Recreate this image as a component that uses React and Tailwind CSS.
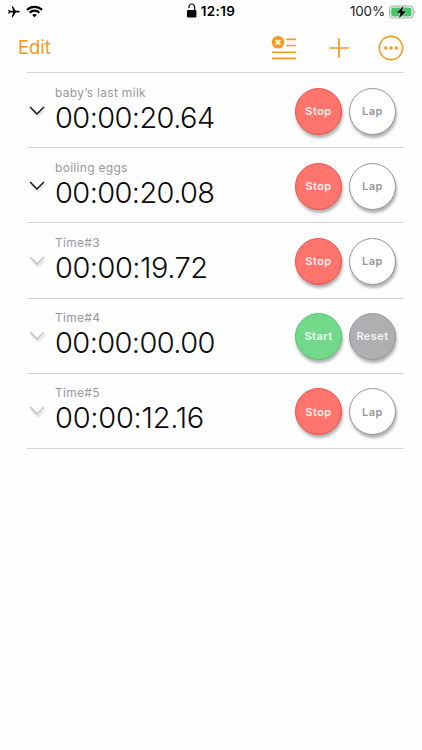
import { useState } from 'react'
import { MdFlight } from 'react-icons/md'

const initialTimers = [
  { id: 1, name: 'baby’s last milk', time: '00:00:20.64', running: true, hasLaps: true, tracking: 'tracking-[-0.6px]' },
  { id: 2, name: 'boiling eggs', time: '00:00:20.08', running: true, hasLaps: true, tracking: 'tracking-[-0.6px]' },
  { id: 3, name: 'Time#3', time: '00:00:19.72', running: true, hasLaps: false, tracking: 'tracking-[-0.5px]' },
  { id: 4, name: 'Time#4', time: '00:00:00.00', running: false, hasLaps: false, tracking: 'tracking-[-0.6px]' },
  { id: 5, name: 'Time#5', time: '00:00:12.16', running: true, hasLaps: false, tracking: 'tracking-[-0.25px]' },
]

function StatusBar() {
  return (
    <div className="grid h-[23px] grid-cols-3 items-center text-black">
      <div className="flex items-center gap-[5px] pl-[7px]">
        <MdFlight className="h-[14px] w-[14px] rotate-90" />
        <svg className="h-[13px] w-[17px]" viewBox="0 0 17 13" fill="none" stroke="currentColor" strokeWidth="2.3">
          <path d="M1 4.9a10.7 10.7 0 0 1 15 0" />
          <path d="M3.7 7.7a6.8 6.8 0 0 1 9.6 0" />
          <path d="M8.5 12.3 6.2 10a3.3 3.3 0 0 1 4.6 0z" fill="currentColor" stroke="none" />
        </svg>
      </div>

      <div className="flex items-center justify-center gap-[4px]">
        <svg className="h-[15px] w-[10px] -translate-y-px" viewBox="0 0 10 15">
          <rect x="0" y="7" width="9.4" height="7.5" rx="0.9" fill="currentColor" />
          <path d="M2 5V3.8a2.8 2.8 0 0 1 5.6 0V7.5" fill="none" stroke="currentColor" strokeWidth="1.2" />
        </svg>
        <span className="pt-px text-[13.5px] leading-none font-semibold tracking-[0.35px]">12:19</span>
      </div>

      <div className="flex items-center justify-end gap-[4px] pr-[6px]">
        <span className="pt-px text-[13.5px] leading-none tracking-[-0.2px] text-[#222]">100%</span>
        <svg className="h-[14px] w-[27px]" viewBox="0 0 27 14">
          <rect x="0.6" y="1" width="23.5" height="12" rx="3.5" fill="#fff" stroke="#a5a5a8" strokeWidth="1.1" />
          <rect x="2.2" y="2.6" width="20.3" height="8.8" rx="2.2" fill="#42c767" />
          <path d="M25.3 5.2c1.5.6 1.5 3 0 3.6z" fill="#a5a5a8" />
          <path d="M14.7.8 7.2 7.7h4.4L9.9 13.3l7.5-7h-4.3z" fill="#000" stroke="#fff" strokeWidth="0.8" paintOrder="stroke" />
        </svg>
      </div>
    </div>
  )
}

function Toolbar() {
  return (
    <div className="flex h-[49px] items-center justify-between pr-[18px] pl-[18px] text-[#f7991c]">
      <button className="text-[18.5px] leading-none tracking-[-0.1px]">Edit</button>

      <div className="flex items-center">
        <button aria-label="Clear all">
          <svg className="h-[26px] w-[26px]" viewBox="0 0 26 26" fill="none" stroke="currentColor" strokeWidth="1.6">
            <circle cx="7" cy="7.3" r="6.3" fill="currentColor" stroke="none" />
            <path d="m4.6 4.9 4.8 4.8m0-4.8L4.6 9.7" stroke="#fff" strokeWidth="1.6" />
            <path d="M15.3 4.4H25M15.3 10.5H25M1 17.2h24M1 23.4h24" />
          </svg>
        </button>
        <button className="ml-[31px]" aria-label="Add timer">
          <svg className="h-[22px] w-[22px]" viewBox="0 0 22 22" stroke="currentColor" strokeWidth="1.7">
            <path d="M11 1.2v19.6M1.2 11h19.6" />
          </svg>
        </button>
        <button className="ml-[28px]" aria-label="More">
          <svg className="h-[26px] w-[26px]" viewBox="0 0 26 26" fill="none" stroke="currentColor">
            <circle cx="13" cy="13" r="11.6" strokeWidth="1.6" />
            <g fill="currentColor" stroke="none">
              <circle cx="7.7" cy="13" r="1.7" />
              <circle cx="13" cy="13" r="1.7" />
              <circle cx="18.3" cy="13" r="1.7" />
            </g>
          </svg>
        </button>
      </div>
    </div>
  )
}

function RoundButton({ className, children, ...props }) {
  return (
    <button
      className={`flex h-[47px] w-[47px] items-center justify-center rounded-full border-[1.5px] text-[11px] font-semibold tracking-[0.45px] shadow-[1px_3px_3px_rgba(0,0,0,0.3)] ${className}`}
      {...props}
    >
      {children}
    </button>
  )
}

function TimerRow({ timer, onToggle }) {
  return (
    <li className="flex h-[75.2px] items-center border-b border-[#d4d4d6] pt-[2px]">
      <svg
        className={`ml-[2px] h-[11px] w-[16px] -translate-y-px drop-shadow-[1px_2px_1px_rgba(0,0,0,0.2)] ${timer.hasLaps ? 'text-[#111]' : 'text-[#c2c2c4]'}`}
        viewBox="0 0 16 11"
        fill="none"
        stroke="currentColor"
        strokeWidth="1.4"
      >
        <path d="m1.1 2 6.9 7 6.9-7" />
      </svg>

      <div className="ml-[10px] flex-1 pb-[3px]">
        <p className="text-[12px] leading-[14px] tracking-[0.3px] text-[#98989d]">{timer.name}</p>
        <p className={`mt-[2px] text-[29px] leading-[32px] font-light text-[#0b0b0b] ${timer.tracking}`}>{timer.time}</p>
      </div>

      <div className="mr-[8px] flex gap-[7px]">
        {timer.running ? (
          <>
            <RoundButton className="border-[#ee5048] bg-[#ff746d] text-[#fff0ee]" onClick={onToggle}>
              Stop
            </RoundButton>
            <RoundButton className="border-[#96969a] bg-white text-[#96969b]">Lap</RoundButton>
          </>
        ) : (
          <>
            <RoundButton className="border-[#4fc870] bg-[#72d98b] text-[#f2fff5]" onClick={onToggle}>
              Start
            </RoundButton>
            <RoundButton className="border-[#96969a] bg-[#afafb2] text-[#f5f5f6]">Reset</RoundButton>
          </>
        )}
      </div>
    </li>
  )
}

export default function App() {
  const [timers, setTimers] = useState(initialTimers)

  const toggleTimer = (id) => {
    setTimers(timers.map((timer) => (timer.id === id ? { ...timer, running: !timer.running } : timer)))
  }

  return (
    <div className="min-h-screen bg-[#fefefe] font-['Inter','Liberation_Sans',sans-serif]">
      <StatusBar />
      <Toolbar />
      <ul className="mr-[18px] ml-[27px] border-t border-[#d4d4d6]">
        {timers.map((timer) => (
          <TimerRow key={timer.id} timer={timer} onToggle={() => toggleTimer(timer.id)} />
        ))}
      </ul>
    </div>
  )
}
